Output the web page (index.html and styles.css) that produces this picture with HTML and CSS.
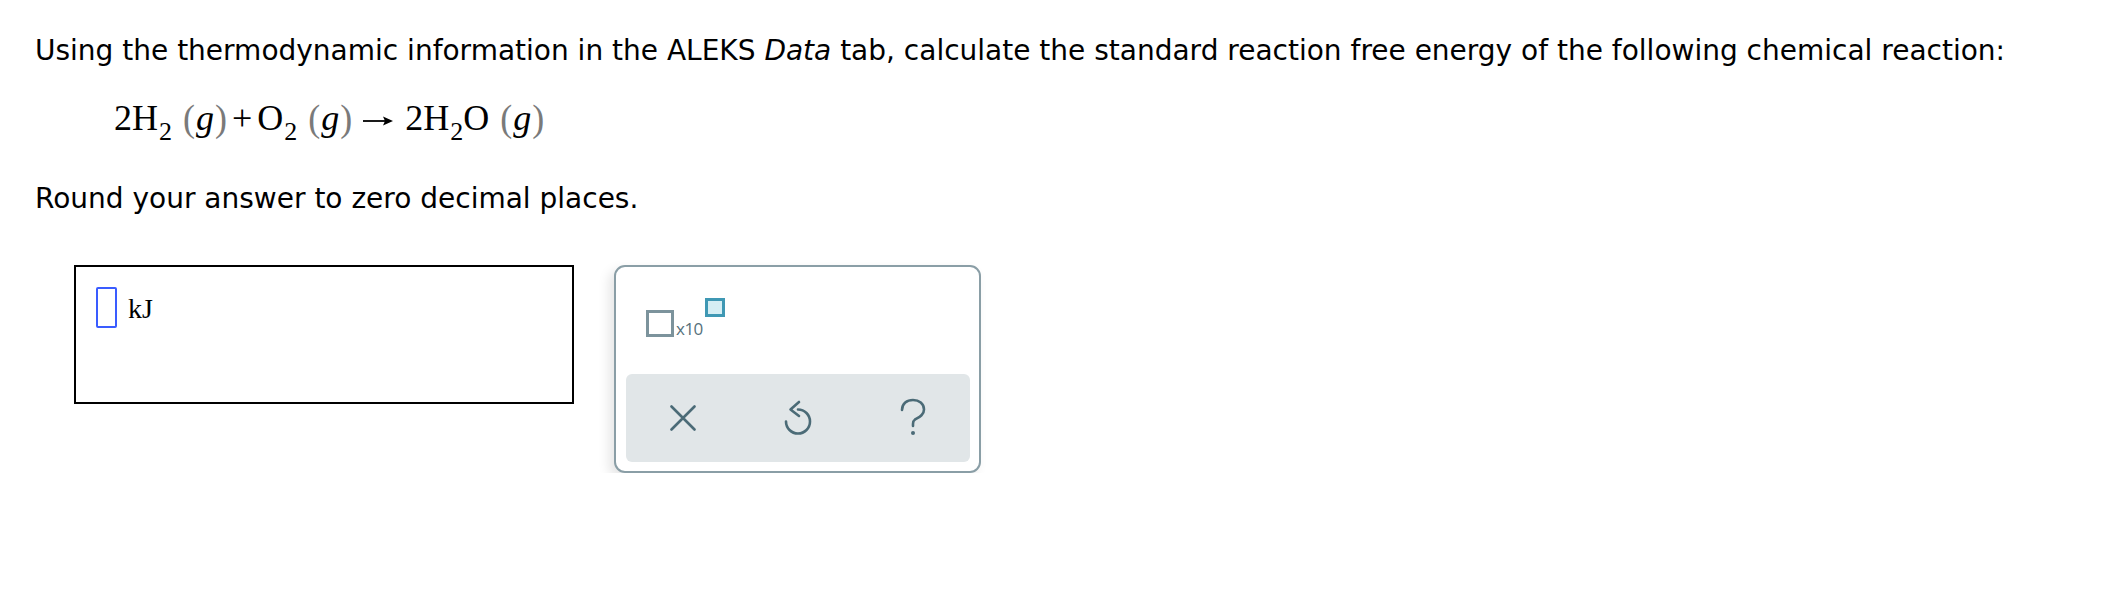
FILE: index.html
```html
<!DOCTYPE html>
<html>
<head>
<meta charset="utf-8">
<link rel="stylesheet" href="styles.css">
</head>
<body>
<div class="page">
  <p class="prompt">Using the thermodynamic information in the ALEKS <i>Data</i> tab, calculate the standard reaction free energy of the following chemical reaction:</p>
  <div class="eq">
    <span>2H</span><span class="sub">2</span><span class="paren lp">(</span><i class="g">g</i><span class="paren">)</span><span class="op">+</span><span>O</span><span class="sub">2</span><span class="paren lp">(</span><i class="g">g</i><span class="paren">)</span><svg class="arrow" width="30" height="12" viewBox="0 0 30 12"><line x1="0" y1="6" x2="22" y2="6" stroke="#000" stroke-width="1.8"/><path d="M30 6 L20 1.5 L22 6 L20 10.5 Z" fill="#000"/></svg><span>2H</span><span class="sub">2</span><span>O</span><span class="paren lp">(</span><i class="g">g</i><span class="paren">)</span>
  </div>
  <p class="prompt round">Round your answer to zero decimal places.</p>
  <div class="answer-row">
    <div class="answer-box">
      <span class="slot"></span>
      <span class="unit">kJ</span>
    </div>
    <div class="tools">
      <div class="sci">
        <span class="base"></span>
        <span class="x10">x10</span>
        <span class="exp"></span>
      </div>
      <div class="bar">
        <div class="btn">
          <svg width="26" height="26" viewBox="0 0 26 26"><path d="M1.5 1.5 L24.5 24.5 M24.5 1.5 L1.5 24.5" stroke="#4b6b77" stroke-width="2.6" stroke-linecap="round" fill="none"/></svg>
        </div>
        <div class="btn">
          <svg width="32" height="36" viewBox="0 0 32 36"><path d="M16 9.5 A12 12 0 1 1 4 21.5" stroke="#4b6b77" stroke-width="2.6" stroke-linecap="round" fill="none"/><path d="M17 2 L8.5 9.5 L17 16" stroke="#4b6b77" stroke-width="2.6" stroke-linecap="round" stroke-linejoin="round" fill="none"/></svg>
        </div>
        <div class="btn">
          <svg width="28" height="40" viewBox="0 0 28 40"><path d="M3 12 C3 5.5 8 2 14 2 C20 2 25 5.5 25 11.5 C25 17.5 19.5 19.5 16 21.5 C14.5 22.5 14 23.5 14 26 V28" stroke="#4b6b77" stroke-width="2.6" stroke-linecap="round" fill="none"/><circle cx="14" cy="35" r="2" fill="#4b6b77"/></svg>
        </div>
      </div>
    </div>
  </div>
</div>
</body>
</html>
```

FILE: styles.css
```css
html, body {
  margin: 0;
  padding: 0;
  background: #fff;
}

.page {
  padding: 34px 0 0 35px;
  color: #000;
}

.prompt {
  margin: 0;
  font-family: "DejaVu Sans", Verdana, sans-serif;
  font-size: 28px;
  line-height: 34px;
  white-space: nowrap;
}

.prompt i {
  font-style: italic;
}

.eq {
  margin: 30px 0 0 79px;
  font-family: "Liberation Serif", "Times New Roman", serif;
  font-size: 36px;
  line-height: 40px;
  height: 40px;
  white-space: nowrap;
  display: flex;
  align-items: baseline;
}

.eq .sub {
  font-size: 26px;
  line-height: 0;
  position: relative;
  top: 10px;
  margin-left: 1px;
}

.eq .paren {
  color: #7a7a7a;
  font-size: 36px;
  transform: scaleY(1.08);
  display: inline-block;
}

.eq .lp {
  margin-left: 11px;
}

.eq .g {
  font-style: italic;
  margin: 0 1px;
}

.eq .op {
  margin: 0 5px;
}

.eq .arrow {
  align-self: center;
  margin: 0 12px 0 11px;
  position: relative;
  top: 3px;
}

.round {
  margin-top: 44px;
}

.answer-row {
  display: flex;
  align-items: flex-start;
  margin-top: 49px;
  margin-left: 39px;
}

.answer-box {
  box-sizing: border-box;
  width: 500px;
  height: 139px;
  border: 2px solid #000;
  display: flex;
  align-items: flex-start;
  padding: 20px 0 0 20px;
}

.slot {
  box-sizing: border-box;
  width: 21px;
  height: 41px;
  border: 2px solid #3a5cff;
  border-radius: 2px;
}

.unit {
  font-family: "Liberation Serif", "Times New Roman", serif;
  font-size: 28px;
  line-height: 32px;
  margin: 6px 0 0 11px;
}

.tools {
  box-sizing: border-box;
  width: 367px;
  height: 208px;
  margin-left: 40px;
  margin-top: 0;
  border: 2px solid #8a9ea6;
  border-radius: 11px;
  box-shadow: -5px 5px 12px rgba(0, 0, 0, 0.10);
  display: flex;
  flex-direction: column;
  padding: 0 9px 9px 10px;
  background: #fff;
}

.sci {
  display: flex;
  align-items: flex-end;
  padding: 31px 0 0 20px;
  height: 39px;
}

.sci .base {
  box-sizing: border-box;
  width: 28px;
  height: 27px;
  border: 3px solid #7c939c;
}

.sci .x10 {
  font-family: "Open Sans", "Liberation Sans", sans-serif;
  font-size: 17px;
  line-height: 17px;
  color: #56717c;
  margin-left: 2px;
  letter-spacing: -0.5px;
}

.sci .exp {
  box-sizing: border-box;
  width: 20px;
  height: 19px;
  border: 3px solid #3f98b4;
  background: #d5eef4;
  align-self: flex-start;
  margin-left: 2px;
}

.bar {
  margin-top: auto;
  height: 88px;
  border-radius: 6px;
  background: #e1e6e8;
  display: flex;
}

.btn {
  flex: 1;
  display: flex;
  align-items: center;
  justify-content: center;
}
```
